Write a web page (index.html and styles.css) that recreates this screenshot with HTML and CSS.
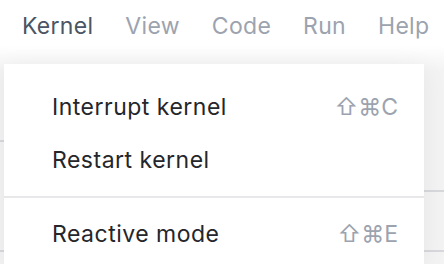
FILE: index.html
```html
<!DOCTYPE html>
<html>
<head>
<meta charset="utf-8">
<link rel="stylesheet" href="styles.css">
</head>
<body>
<nav class="menubar">
  <span class="menubar-item active">Kernel</span>
  <span class="menubar-item">View</span>
  <span class="menubar-item">Code</span>
  <span class="menubar-item">Run</span>
  <span class="menubar-item">Help</span>
</nav>
<main class="workspace">
  <div class="gutter">
    <div class="cell cell-a"></div>
    <div class="cell cell-b"></div>
  </div>
  <div class="cells">
    <div class="cell cell-c"></div>
    <div class="cell cell-d"></div>
  </div>
</main>
<div class="dropdown">
  <div class="dropdown-item"><span>Interrupt kernel</span><span class="shortcut">⇧⌘C</span></div>
  <div class="dropdown-item"><span>Restart kernel</span></div>
  <div class="separator"></div>
  <div class="dropdown-item"><span>Reactive mode</span><span class="shortcut">⇧⌘E</span></div>
</div>
</body>
</html>
```
FILE: styles.css
```css
html, body {
  margin: 0;
  padding: 0;
  background: #ffffff;
  font-family: Inter, "Noto Sans", "DejaVu Sans", sans-serif;
  overflow: hidden;
}
.menubar {
  display: flex;
  gap: 32px;
  padding: 12px 0 0 22px;
  height: 33px;
  font-size: 23px;
  line-height: 28px;
  letter-spacing: 0.3px;
}
.menubar-item {
  color: #9ca3af;
}
.menubar-item.active {
  color: #4b5563;
}
.workspace {
  display: flex;
  height: 219px;
  background: linear-gradient(#ffffff 0px, #f3f3f4 26px);
}
.gutter {
  width: 40px;
  display: flex;
  flex-direction: column;
}
.cells {
  flex: 1;
  display: flex;
  flex-direction: column;
}
.cell {
  border-bottom: 2px solid #d7d8db;
  flex: none;
}
.cell-a { height: 95px; }
.cell-b { height: 108px; }
.cell-c { height: 145px; }
.cell-d { height: 58px; }
.dropdown {
  position: absolute;
  left: 4px;
  top: 64px;
  width: 420px;
  height: 200px;
  background: #ffffff;
  box-shadow: 0 4px 24px rgba(0, 0, 0, 0.06);
  padding-top: 17px;
  box-sizing: border-box;
  overflow: hidden;
}
.dropdown-item {
  display: flex;
  justify-content: space-between;
  padding: 0 26px 0 48px;
  height: 53px;
  line-height: 53px;
  font-size: 23px;
  letter-spacing: 0.5px;
  color: #25262b;
}
.shortcut {
  color: #9ca3af;
  letter-spacing: 0;
}
.separator {
  height: 2px;
  margin: 9px 0 10px;
  background: #e8e8ea;
}
```
